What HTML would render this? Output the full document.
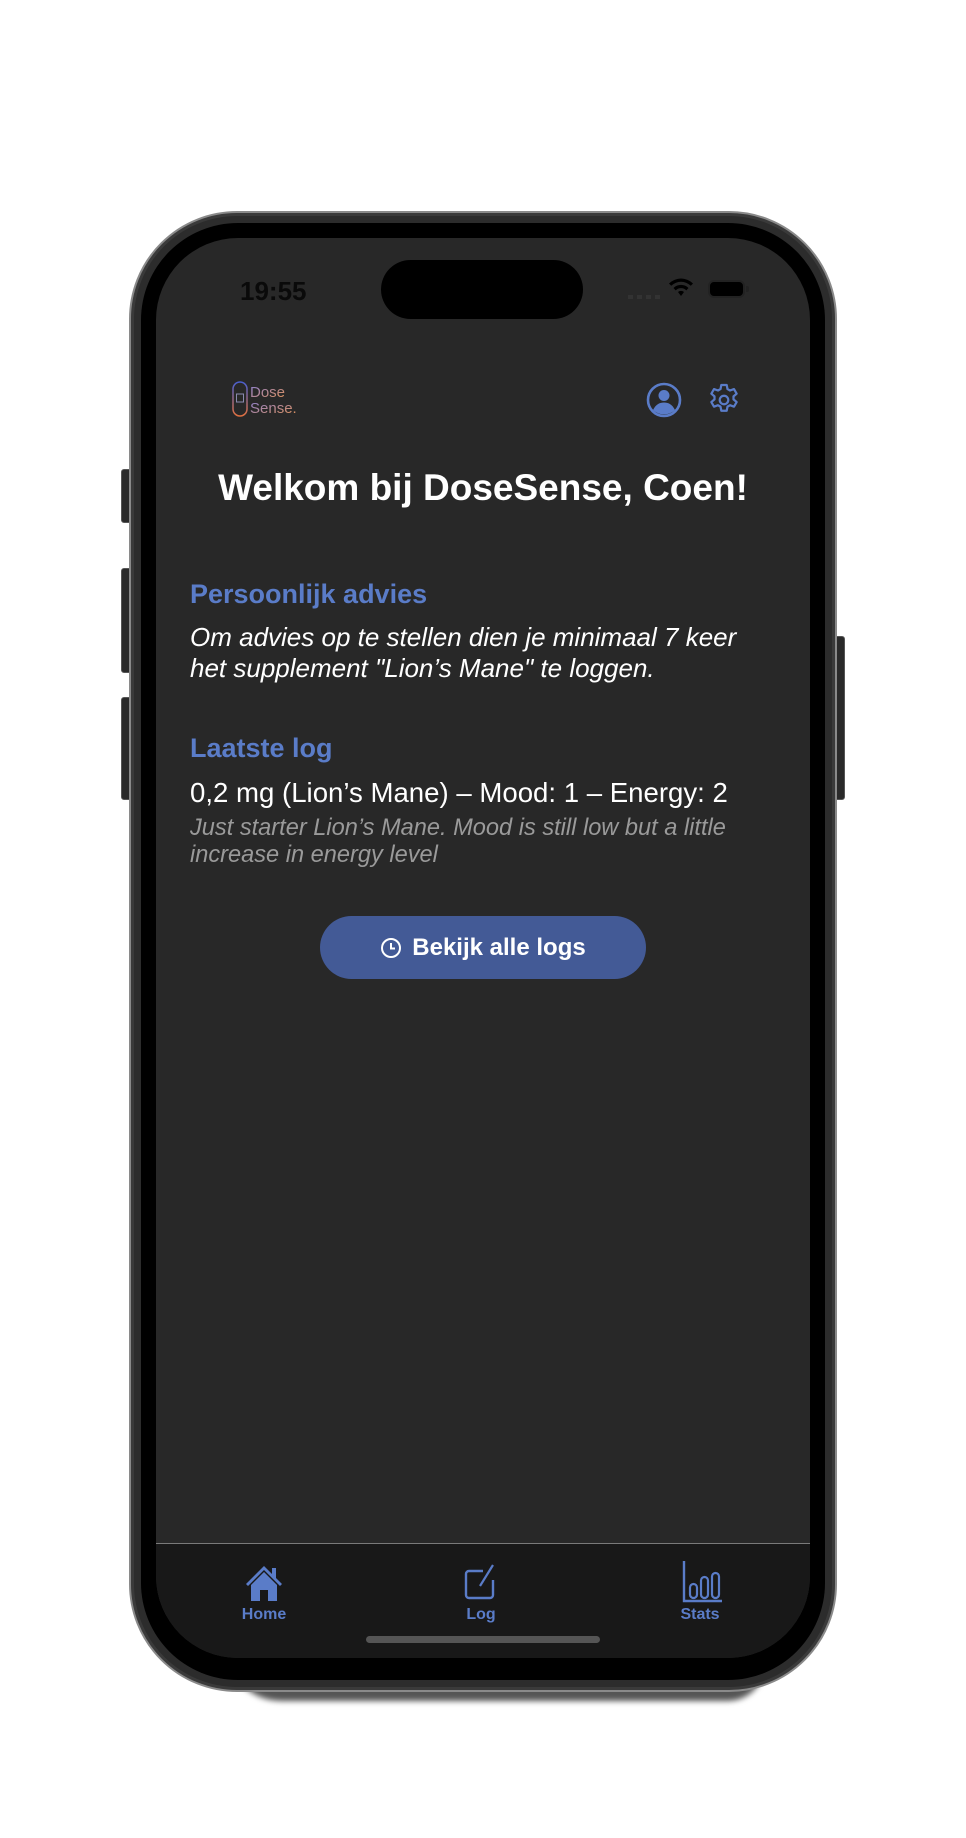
<!DOCTYPE html>
<html><head><meta charset="utf-8"><style>
*{margin:0;padding:0;box-sizing:border-box}
html,body{width:966px;height:1838px;background:#fff;overflow:hidden;font-family:"Liberation Sans",sans-serif}
.abs{position:absolute}
.btn{position:absolute;background:#2a2a2a;border:1px solid #555;border-radius:3px}
</style></head><body>
<div class="abs" style="left:225px;top:1645px;width:540px;height:56px;background:#555;border-radius:0 0 40px 60px;filter:blur(3px)"></div>
<div class="btn" style="left:121px;top:469px;width:12px;height:54px"></div>
<div class="btn" style="left:121px;top:568px;width:12px;height:105px"></div>
<div class="btn" style="left:121px;top:697px;width:12px;height:103px"></div>
<div class="btn" style="left:833px;top:636px;width:12px;height:164px"></div>
<div class="abs" style="left:129px;top:211px;width:708px;height:1481px;border-radius:108px;background:#2c2c2c;border:2px solid #8a8a8a;box-shadow:inset 0 0 0 3px #3a3a3a"></div>
<div class="abs" style="left:141px;top:223px;width:684px;height:1457px;border-radius:97px;background:#000"></div>
<div class="abs" style="left:156px;top:238px;width:654px;height:1420px;border-radius:82px;background:#282828;overflow:hidden">
  <div class="abs" style="left:84px;top:38px;font-size:26px;font-weight:bold;color:#0a0a0a">19:55</div>
  <div class="abs" style="left:225px;top:22px;width:202px;height:59px;border-radius:30px;background:#000"></div>
  <div class="abs" style="left:472px;top:57px;width:34px;height:4px;background:repeating-linear-gradient(90deg,#333 0 5px,transparent 5px 9px)"></div>
  <svg class="abs" style="left:512px;top:40px" width="26" height="20" viewBox="0 0 26 20"><path d="M13 18l-3-4a4.5 4.5 0 0 1 6 0z M5.5 10a10.5 10.5 0 0 1 15 0l-2.2 2.4a7.4 7.4 0 0 0-10.6 0z M1 5.5a17 17 0 0 1 24 0l-2.2 2.3a14 14 0 0 0-19.6 0z" fill="#000"/></svg>
  <div class="abs" style="left:552px;top:42px;width:37px;height:18px;border-radius:6px;border:2px solid #222;background:#000"></div>
  <div class="abs" style="left:590px;top:48px;width:3px;height:6px;background:#222;border-radius:0 2px 2px 0"></div>
  <svg class="abs" style="left:76px;top:142px" width="84" height="38" viewBox="0 0 84 38">
    <defs><linearGradient id="g" x1="0" y1="0" x2="0" y2="1"><stop offset="0" stop-color="#4a5fd0"/><stop offset="1" stop-color="#e07040"/></linearGradient>
    <linearGradient id="t" x1="0" y1="0" x2="1" y2="1"><stop offset="0" stop-color="#8a7fd0"/><stop offset="1" stop-color="#e09050"/></linearGradient></defs>
    <rect x="1" y="2" width="14" height="34" rx="7" fill="none" stroke="url(#g)" stroke-width="1.5"/>
    <rect x="4.5" y="14" width="7" height="8" fill="none" stroke="#8a8ab0" stroke-width="1"/>
    <text x="18" y="17" font-size="15" fill="url(#t)" font-family="Liberation Sans">Dose</text>
    <text x="18" y="33" font-size="15" fill="url(#t)" font-family="Liberation Sans">Sense.</text>
  </svg>
  <svg class="abs" style="left:489px;top:143px" width="38" height="38" viewBox="0 0 38 38"><circle cx="19" cy="19" r="16" fill="none" stroke="#5a7cc8" stroke-width="2.6"/><circle cx="19" cy="14.5" r="5.5" fill="#5a7cc8"/><path d="M8 29c3-6 7-7.5 11-7.5s8 1.5 11 7.5a16 16 0 0 1-22 0z" fill="#5a7cc8"/></svg>
  <svg class="abs" style="left:549px;top:143px" width="38" height="38" viewBox="0 0 24 24"><path fill="none" stroke="#5a7cc8" stroke-width="1.4" stroke-linejoin="round" d="M10.3 2.5h3.4l.5 2.6 1.6.9 2.5-.9 1.7 2.9-2 1.7v1.9l2 1.7-1.7 2.9-2.5-.9-1.6.9-.5 2.6h-3.4l-.5-2.6-1.6-.9-2.5.9-1.7-2.9 2-1.7V9.7l-2-1.7 1.7-2.9 2.5.9 1.6-.9z"/><circle cx="12" cy="12" r="2.7" fill="none" stroke="#5a7cc8" stroke-width="1.4"/></svg>
  <div class="abs" style="left:0;width:654px;top:229px;text-align:center;font-size:37px;font-weight:bold;color:#fff">Welkom bij DoseSense, Coen!</div>
  <div class="abs" style="left:34px;top:341px;font-size:27px;font-weight:bold;color:#5a7cc8">Persoonlijk advies</div>
  <div class="abs" style="left:34px;top:384px;font-size:26px;font-style:italic;color:#fff;line-height:31px;width:620px;white-space:nowrap">Om advies op te stellen dien je minimaal 7 keer<br>het supplement "Lion’s Mane" te loggen.</div>
  <div class="abs" style="left:34px;top:495px;font-size:27px;color:#5a7cc8;font-weight:bold">Laatste log</div>
  <div class="abs" style="left:34px;top:539px;font-size:27.6px;color:#fff;white-space:nowrap">0,2 mg (Lion’s Mane) – Mood: 1 – Energy: 2</div>
  <div class="abs" style="left:34px;top:577px;font-size:23.6px;font-style:italic;color:#9a9a9a;line-height:27px;white-space:nowrap">Just starter Lion’s Mane. Mood is still low but a little<br>increase in energy level</div>
  <div class="abs" style="left:164px;top:678px;width:326px;height:63px;border-radius:32px;background:#435a96;color:#fff;font-size:24px;font-weight:bold;display:flex;align-items:center;justify-content:center;gap:10px">
    <svg width="22" height="22" viewBox="0 0 22 22"><circle cx="11" cy="11" r="9" fill="none" stroke="#fff" stroke-width="2"/><path d="M11 6v5.5h4" fill="none" stroke="#fff" stroke-width="2"/></svg>Bekijk alle logs</div>
  <div class="abs" style="left:0;top:1305px;width:654px;height:115px;background:#181818;border-top:1.5px solid #7a7a7a"></div>
  <svg class="abs" style="left:88px;top:1325px" width="40" height="40" viewBox="0 0 40 40"><path d="M20 3L2 21l2 2L20 7l16 16 2-2-6-6V5h-4v6z" fill="#5a7cc8"/><path d="M7 22L20 9l13 13v16H24V27h-8v11H7z" fill="#5a7cc8"/></svg>
  <svg class="abs" style="left:307px;top:1324px" width="36" height="40" viewBox="0 0 36 40"><path d="M20 9H6a3 3 0 0 0-3 3v21a3 3 0 0 0 3 3h21a3 3 0 0 0 3-3V18" fill="none" stroke="#5a7cc8" stroke-width="2.4"/><path d="M17 24L30 3" stroke="#5a7cc8" stroke-width="2.2"/></svg>
  <svg class="abs" style="left:526px;top:1322px" width="40" height="44" viewBox="0 0 40 44"><path d="M2 1v40h38" fill="none" stroke="#5a7cc8" stroke-width="2.4"/><rect x="8" y="24" width="7" height="14" rx="3.5" fill="none" stroke="#5a7cc8" stroke-width="2.2"/><rect x="19" y="17" width="7" height="21" rx="3.5" fill="none" stroke="#5a7cc8" stroke-width="2.2"/><rect x="30" y="13" width="7" height="25" rx="3.5" fill="none" stroke="#5a7cc8" stroke-width="2.2"/></svg>
  <div class="abs" style="left:58px;width:100px;top:1368px;text-align:center;font-size:16px;font-weight:bold;color:#5a7cc8">Home</div>
  <div class="abs" style="left:275px;width:100px;top:1368px;text-align:center;font-size:16px;font-weight:bold;color:#5a7cc8">Log</div>
  <div class="abs" style="left:494px;width:100px;top:1368px;text-align:center;font-size:16px;font-weight:bold;color:#5a7cc8">Stats</div>
  <div class="abs" style="left:210px;top:1398px;width:234px;height:7px;border-radius:4px;background:#555"></div>
</div>
</body></html>
